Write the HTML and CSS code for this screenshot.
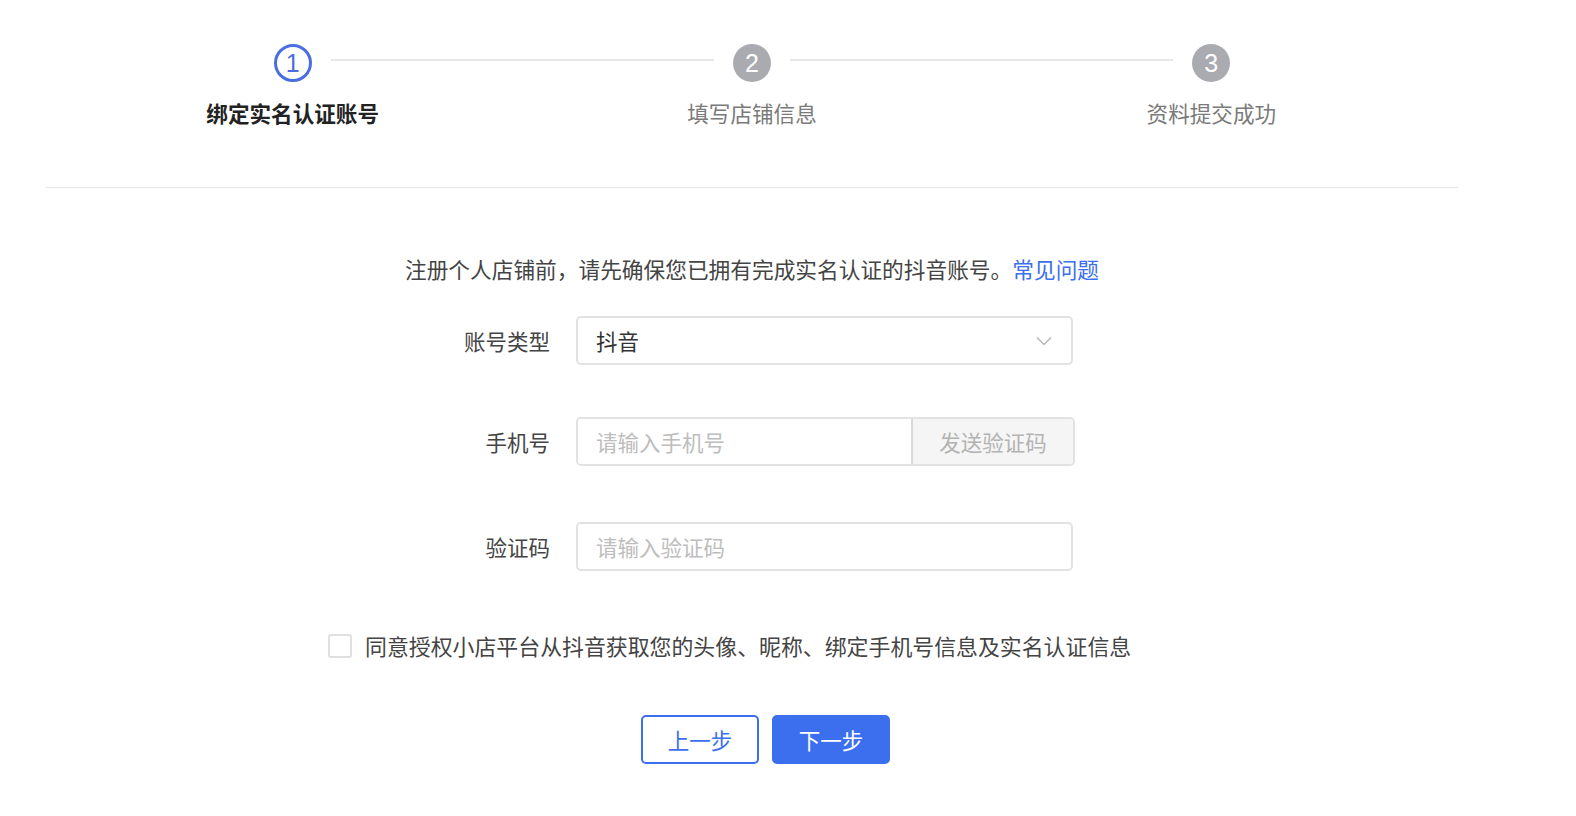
FILE: index.html
```html
<!DOCTYPE html>
<html lang="zh-CN">
<head>
    <meta charset="UTF-8">
    <meta name="viewport" content="width=device-width, initial-scale=1.0">
    <title>绑定实名认证账号</title>
    <link rel="stylesheet" href="styles.css">
</head>
<body>
    <div class="page">
        <div class="steps">
            <div class="step active">
                <div class="step-dot">1</div>
                <div class="step-title">绑定实名认证账号</div>
            </div>
            <div class="step">
                <div class="step-dot">2</div>
                <div class="step-title">填写店铺信息</div>
            </div>
            <div class="step last">
                <div class="step-dot">3</div>
                <div class="step-title">资料提交成功</div>
            </div>
        </div>

        <div class="divider"></div>

        <p class="notice">注册个人店铺前，请先确保您已拥有完成实名认证的抖音账号。<a href="#" class="link">常见问题</a></p>

        <form class="form" onsubmit="return false">
            <div class="form-row row-type">
                <label class="form-label">账号类型</label>
                <div class="select">
                    <span>抖音</span>
                    <svg class="select-arrow" width="16" height="10" viewBox="0 0 16 10">
                        <path d="M1 1.5 L8 8.5 L15 1.5" fill="none" stroke="#b5b5b5" stroke-width="1.4"/>
                    </svg>
                </div>
            </div>

            <div class="form-row row-phone">
                <label class="form-label">手机号</label>
                <div class="input-group">
                    <input type="text" class="input" placeholder="请输入手机号">
                    <button type="button" class="send-btn">发送验证码</button>
                </div>
            </div>

            <div class="form-row row-code">
                <label class="form-label">验证码</label>
                <input type="text" class="input full" placeholder="请输入验证码">
            </div>

            <label class="agree">
                <span class="checkbox"></span>
                <span>同意授权小店平台从抖音获取您的头像、昵称、绑定手机号信息及实名认证信息</span>
            </label>

            <div class="actions">
                <button type="button" class="btn btn-default">上一步</button>
                <button type="submit" class="btn btn-primary">下一步</button>
            </div>
        </form>
    </div>
</body>
</html>
```

FILE: styles.css
```css
body {
    margin: 0;
    font-family: "Noto Sans CJK SC", "Noto Sans", sans-serif;
    background: white;
    color: #333;
}
.page {
    width: 1504px;
    padding-top: 44px;
}
.steps {
    display: flex;
    padding: 0 63px;
}
.step {
    flex: 1;
    position: relative;
    display: flex;
    flex-direction: column;
    align-items: center;
}
.step::after {
    content: "";
    position: absolute;
    top: 15px;
    left: calc(50% + 38px);
    width: calc(100% - 76px);
    height: 2px;
    background: #e8e8e8;
}
.step.last::after {
    display: none;
}
.step-dot {
    width: 38px;
    height: 38px;
    box-sizing: border-box;
    border-radius: 50%;
    background: #a9abb0;
    color: white;
    font-family: "Liberation Sans", sans-serif;
    font-size: 25px;
    line-height: 38px;
    text-align: center;
}
.step.active .step-dot {
    background: white;
    border: 3px solid #4a6ee0;
    color: #4a6ee0;
    line-height: 32px;
}
.step-title {
    margin-top: 14px;
    font-size: 21.6px;
    line-height: 34px;
    color: #7a7a7a;
}
.step.active .step-title {
    color: #222;
    font-weight: bold;
}
.divider {
    margin: 57px 46px 0;
    height: 1px;
    background: #e5e5e5;
}
.notice {
    margin: 64px 0 0;
    text-align: center;
    font-size: 21.7px;
    line-height: 34px;
    color: #444;
}
.link {
    color: #3b6fee;
    text-decoration: none;
}
.form-row {
    display: flex;
    align-items: center;
    margin-left: 430px;
}
.row-type {
    margin-top: 30px;
}
.row-phone {
    margin-top: 52px;
}
.row-code {
    margin-top: 56px;
}
.form-label {
    width: 120px;
    margin-right: 26px;
    text-align: right;
    font-size: 21.5px;
    color: #444;
}
.select {
    width: 497px;
    height: 49px;
    box-sizing: border-box;
    border: 2px solid #e2e2e2;
    border-radius: 5px;
    display: flex;
    align-items: center;
    justify-content: space-between;
    padding: 0 19px 0 18px;
    font-size: 21.5px;
    color: #333;
}
.input-group {
    display: flex;
    width: 499px;
    height: 49px;
    box-sizing: border-box;
    border: 2px solid #e2e2e2;
    border-radius: 5px;
    overflow: hidden;
}
.input {
    height: 49px;
    box-sizing: border-box;
    border: none;
    padding: 0 18px;
    font-family: inherit;
    font-size: 21.5px;
    color: #333;
    outline: none;
}
.input-group .input {
    flex: 1;
    height: 45px;
    width: 0;
}
.input.full {
    width: 497px;
    border: 2px solid #e2e2e2;
    border-radius: 5px;
}
.input::placeholder {
    color: #bdbdbd;
}
.send-btn {
    width: 162px;
    border: none;
    border-left: 2px solid #d9d9d9;
    background: #f5f5f5;
    color: #b3b3b3;
    font-family: inherit;
    font-size: 21.5px;
    padding: 0;
}
.agree {
    display: flex;
    align-items: center;
    margin: 59px 0 0 328px;
    font-size: 21.9px;
    color: #444;
}
.checkbox {
    width: 24px;
    height: 24px;
    box-sizing: border-box;
    border: 2px solid #e0e0e0;
    border-radius: 3px;
    margin-right: 13px;
}
.actions {
    display: flex;
    justify-content: center;
    gap: 13px;
    padding-left: 27px;
    margin-top: 54px;
}
.btn {
    width: 118px;
    height: 49px;
    box-sizing: border-box;
    border-radius: 5px;
    font-family: inherit;
    font-size: 21.5px;
    cursor: pointer;
}
.btn-default {
    background: white;
    border: 2px solid #3b6fee;
    color: #3b6fee;
}
.btn-primary {
    background: #3b6fee;
    border: 2px solid #3b6fee;
    color: white;
}
```
